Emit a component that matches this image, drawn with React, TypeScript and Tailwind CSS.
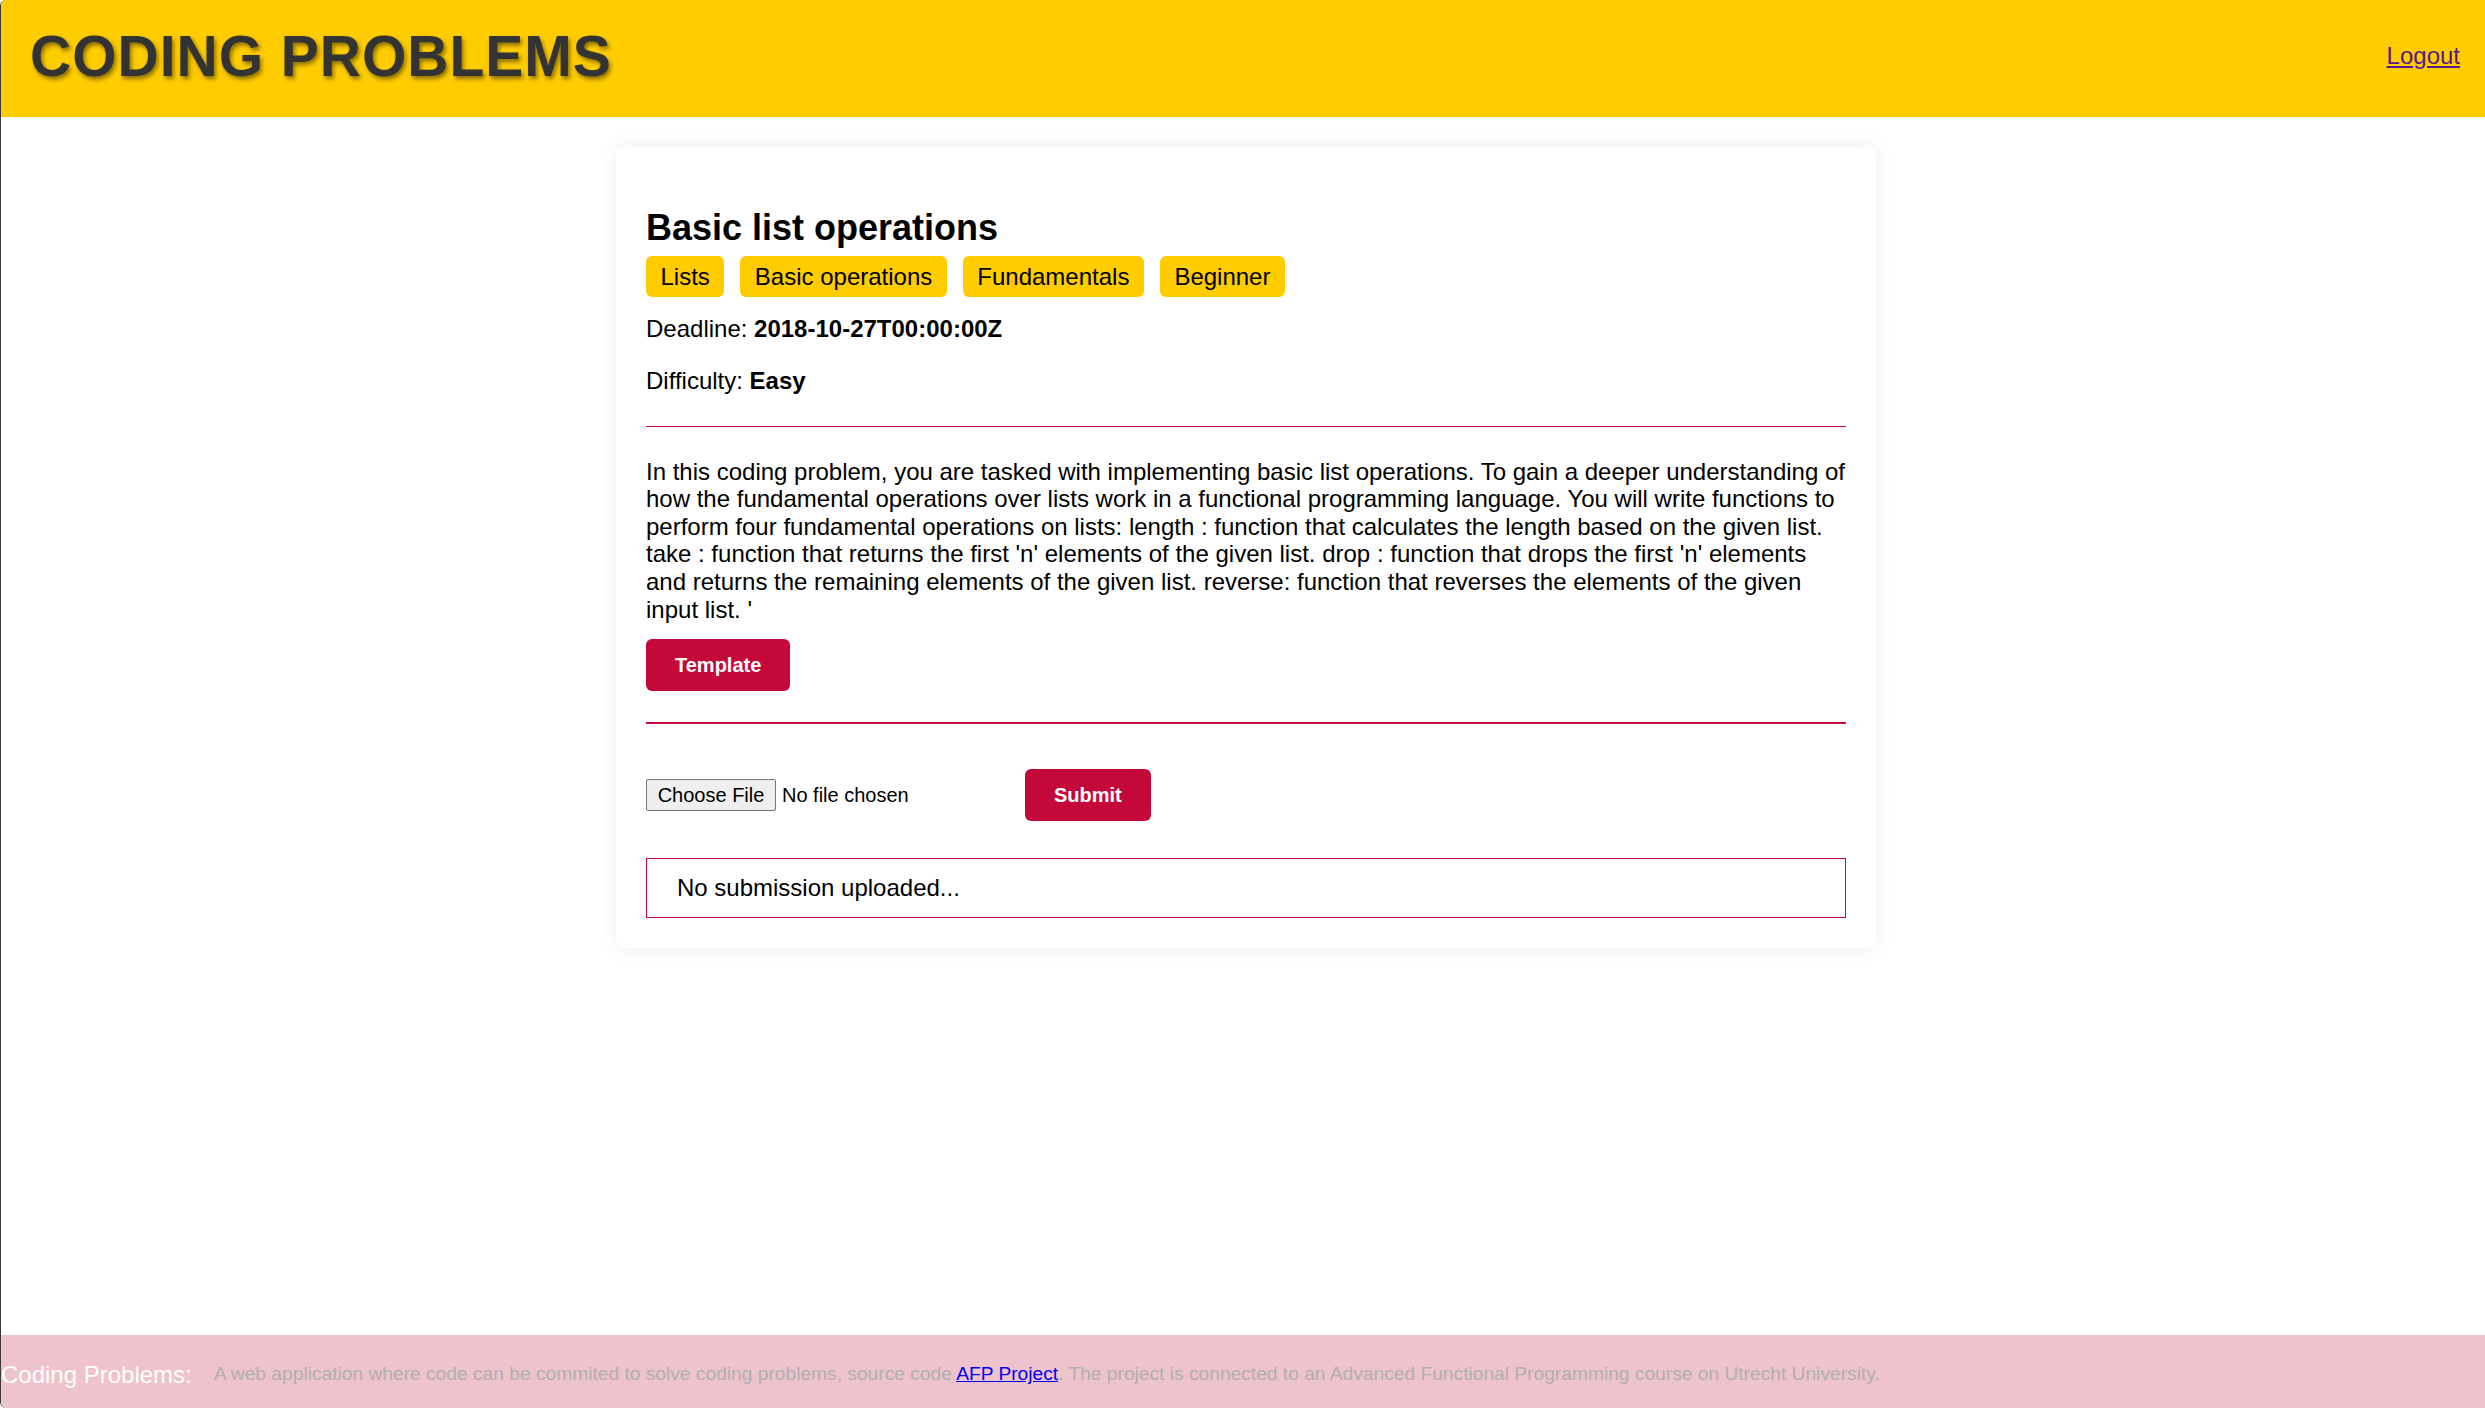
import React from "react";

const FONT = { fontFamily: '"Liberation Sans", Arial, Helvetica, sans-serif' };

function Tag({ label }: { label: string }) {
  return (
    <span className="flex h-[41px] items-center rounded-[6px] bg-[#ffcc00] px-[14.5px] text-[24px] text-black">
      {label}
    </span>
  );
}

export default function App() {
  return (
    <div
      className="flex h-screen flex-col overflow-hidden rounded-l-[6px] border-l border-[#3a3a3a] bg-white leading-[1.15] text-black"
      style={FONT}
    >
      <header className="flex h-[117px] shrink-0 items-center justify-between bg-[#ffcc00] pb-[5px] pl-[29px] pr-[25px]">
        <h1 className="text-[57px] font-bold uppercase leading-none tracking-[1px] text-[#333333] [text-shadow:2px_3px_4px_rgba(0,0,0,0.45)]">
          Coding Problems
        </h1>
        <a href="#" className="text-[24px] text-[#551a8b] underline">
          Logout
        </a>
      </header>

      <main className="flex flex-1 justify-center pl-[6px]">
        <section className="mt-[30px] h-fit w-[1260px] rounded-[8px] bg-white p-[30px] shadow-[0_0_22px_rgba(0,0,0,0.07)]">
          <h2 className="mt-[30px] mb-[8px] text-[36px] font-bold">Basic list operations</h2>
          <div className="flex gap-[16px]">
            <Tag label="Lists" />
            <Tag label="Basic operations" />
            <Tag label="Fundamentals" />
            <Tag label="Beginner" />
          </div>
          <p className="mt-[18px] text-[24px]">
            Deadline: <b>2018-10-27T00:00:00Z</b>
          </p>
          <p className="mt-[24px] text-[24px]">
            Difficulty: <b>Easy</b>
          </p>
          <hr className="mt-[31px] border-0 border-t border-[#c4093a]" />
          <p className="mt-[31px] text-[24px]">
            In this coding problem, you are tasked with implementing basic list operations. To gain a deeper
            understanding of how the fundamental operations over lists work in a functional programming language.
            You will write functions to perform four fundamental operations on lists: length : function that
            calculates the length based on the given list. take : function that returns the first 'n' elements of
            the given list. drop : function that drops the first 'n' elements and returns the remaining elements of
            the given list. reverse: function that reverses the elements of the given input list. '
          </p>
          <button className="mt-[16px] flex h-[52px] items-center rounded-[6px] bg-[#c4093a] px-[29px] text-[20px] font-bold text-white">
            Template
          </button>
          <hr className="mt-[31px] border-0 border-t-2 border-[#c4093a]" />
          <div className="mt-[45px] flex items-center">
            <label className="flex w-[379px] items-center text-[20px]">
              <span className="flex h-[32px] w-[130px] items-center justify-center rounded-[2px] border border-[#767676] bg-[#efefef] text-black">
                Choose File
              </span>
              <span className="ml-[6px]">No file chosen</span>
            </label>
            <button className="flex h-[52px] items-center rounded-[6px] bg-[#c4093a] px-[29px] text-[20px] font-bold text-white">
              Submit
            </button>
          </div>
          <div className="mt-[37px] flex h-[60px] items-center border border-[#c4093a] pl-[30px] text-[24px]">
            No submission uploaded...
          </div>
        </section>
      </main>

      <footer className="flex h-[73px] shrink-0 items-center bg-[#eec3cc] pt-[6px]">
        <span className="text-[24px] text-white">Coding Problems:</span>
        <span className="ml-[22px] text-[19.2px] text-[#b0b0b0]">
          A web application where code can be commited to solve coding problems, source code{" "}
          <a href="#" className="text-[#0000ee] underline">
            AFP Project
          </a>
          . The project is connected to an Advanced Functional Programming course on Utrecht University.
        </span>
      </footer>
    </div>
  );
}
